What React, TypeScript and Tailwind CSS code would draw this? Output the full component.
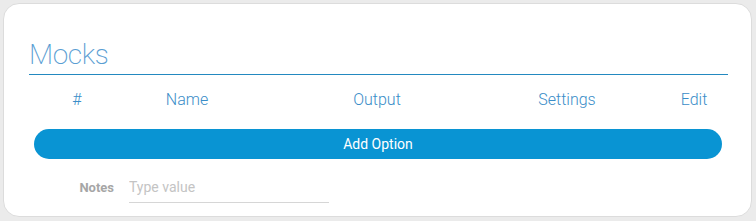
import React from 'react';

const columns = [
    { label: '#', ml: 'ml-[18px]' },
    { label: 'Name', ml: 'ml-[50px]' },
    { label: 'Output', ml: 'ml-[130px]' },
    { label: 'Settings', ml: 'ml-[130px]' },
    { label: 'Edit', ml: 'ml-[67px]' },
];

export default function App() {
    return (
        <div className="w-[756px] h-[221px] bg-[#ebebeb] p-[3px] pr-[4px] pb-[4px] font-['Roboto',sans-serif]">
            <div className="h-full bg-white rounded-[16px] border border-[#dcdcdc] pl-[25px] pr-[23px] pt-[33px]">
                <h1 className="text-[28px] leading-[36px] font-extralight tracking-[-0.4px] text-[#5a9ed3]">Mocks</h1>
                <div className="h-px bg-[#2389c0] mt-[1px]" />
                <div className="flex items-center h-[26px] mt-[12px] text-[16px] font-light text-[#3a8dc8]">
                    {columns.map((c) => (
                        <div key={c.label} className={`w-[60px] text-center shrink-0 ${c.ml}`}>
                            {c.label}
                        </div>
                    ))}
                </div>
                <button className="mt-[16px] ml-[5px] w-[688px] h-[30px] rounded-full bg-[#0994d3] text-white text-[14px] flex items-center justify-center">
                    Add Option
                </button>
                <div className="flex items-center mt-[13px]">
                    <span className="w-[100px] text-right pr-[15px] text-[13px] font-bold text-[#a6a6a6]">Notes</span>
                    <input
                        type="text"
                        placeholder="Type value"
                        className="w-[200px] h-[31px] border-b border-[#d6d6d6] text-[14px] text-[#555] placeholder:text-[#c4c4c4] outline-none"
                    />
                </div>
            </div>
        </div>
    );
}
